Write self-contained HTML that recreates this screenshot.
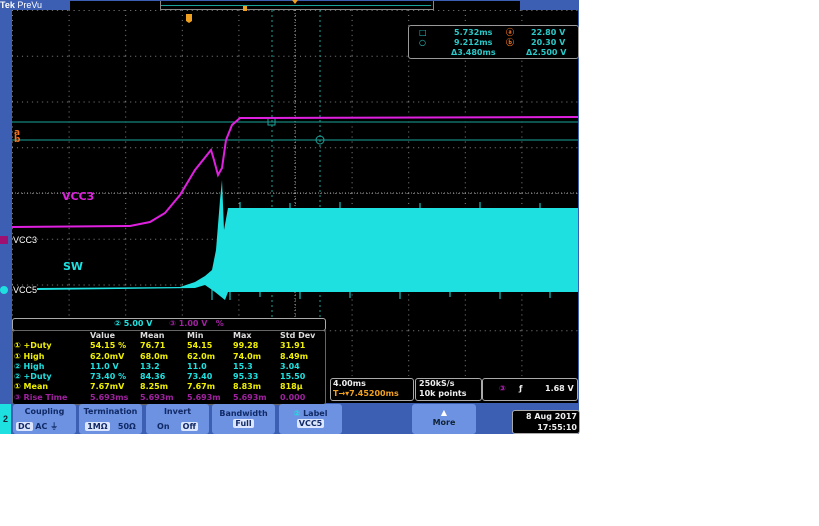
<!DOCTYPE html>
<html><head><meta charset="utf-8"><style>
body{margin:0;width:819px;height:526px;background:#fff;position:relative;overflow:hidden;font-family:"Liberation Sans",sans-serif;}
.a{position:absolute;}
.m{font-family:"DejaVu Sans","Liberation Sans",sans-serif;font-weight:bold;font-size:8px;line-height:10.3px;white-space:nowrap;}
.m span{display:inline-block}
.c0{width:76px}.c1{width:50px}.c2{width:47px}.c3{width:46px}.c4{width:47px}
.btn{position:absolute;top:404px;height:30px;background:#6d92e2;border-radius:3px;color:#112a66;font-size:8px;line-height:10px;font-weight:bold;text-align:center;font-family:"DejaVu Sans",sans-serif;white-space:nowrap;box-sizing:border-box;padding-top:3px}
.sel{background:#dde6ff;padding:0 2px;border-radius:2px}
.box{position:absolute;border:1px solid #aaa;border-radius:3px;background:#000;color:#eee;font-family:"DejaVu Sans",sans-serif;font-size:8px;font-weight:bold;line-height:10px;white-space:nowrap;}
</style></head><body>
<div class="a" style="left:0;top:0;width:579px;height:434px;background:#3c5fb4"></div>
<div class="a" style="left:12px;top:10px;width:566px;height:393px;background:#000"></div>
<div class="a" style="left:0;top:0;width:70px;height:10px;color:#fff;font-size:9px;line-height:10px;font-weight:bold">Tek <span style="font-weight:normal">PreVu</span></div>
<div class="a" style="left:70px;top:1px;width:450px;height:9px;background:#000"></div>
<div class="a" style="left:160px;top:1px;width:272px;height:8px;border:1px solid #888;border-top:none"></div>
<div class="a" style="left:161px;top:5px;width:270px;height:1px;background:#1aa39a"></div>
<svg class="a" style="left:0;top:0" width="579" height="434">
<defs><pattern id="g" x="12" y="10" width="56.6" height="45.75" patternUnits="userSpaceOnUse">
<path d="M0 0.5H56.6M0.5 0V45.75" stroke="#888" stroke-width="1" stroke-dasharray="1 4" fill="none"/></pattern></defs>
<rect x="12" y="10" width="566" height="366" fill="url(#g)"/>
<line x1="12" y1="193" x2="578" y2="193" stroke="#999" stroke-dasharray="1 2"/>
<line x1="295" y1="10" x2="295" y2="376" stroke="#999" stroke-dasharray="1 2"/>
<line x1="12" y1="122" x2="578" y2="122" stroke="#1aa39a"/>
<line x1="12" y1="140" x2="578" y2="140" stroke="#1aa39a"/>
<line x1="272" y1="10" x2="272" y2="376" stroke="#1aa39a" stroke-dasharray="2 3"/>
<line x1="320" y1="10" x2="320" y2="376" stroke="#1aa39a" stroke-dasharray="2 3"/>
<rect x="268" y="118" width="7" height="7" fill="none" stroke="#1aa39a"/>
<circle cx="320" cy="140" r="4" fill="none" stroke="#1aa39a"/>
<path d="M12 227 L130 226 L150 222 L165 213 L180 195 L195 170 L211 150 L214 160 L218 175 L222 168 L226 140 L232 125 L240 118 L578 117" stroke="#e020e0" stroke-width="2" fill="none"/>
<path d="M37 288 L180 287 L195 282 L205 276 L212 270 L216 250 L220 200 L222 180 L224 230 L228 208 L578 208 L578 292 L228 292 L225 300 L215 292 L205 285 L195 288 L37 290Z" fill="#1ee0e0"/>
<path d="M212 282V300M230 292v8M260 292v5M300 292v7M350 292v6M400 292v7M450 292v5M500 292v7M550 292v6M240 208v-6M290 208v-5M340 208v-6M420 208v-5M480 208v-6M540 208v-5" stroke="#1ee0e0"/>
<path d="M186 14h6v7l-3 2-3-2z" fill="#f0a020"/><path d="M292 0h6l-3 4z" fill="#f0a020"/><path d="M243 6h4v5h-4z" fill="#f0a020"/>
<text x="14" y="135" fill="#f07020" font-size="9" font-weight="bold" font-family="DejaVu Sans">a</text>
<text x="14" y="142" fill="#f07020" font-size="9" font-weight="bold" font-family="DejaVu Sans">b</text>
<text x="62" y="200" fill="#e020e0" font-size="11" font-weight="bold" font-family="DejaVu Sans">VCC3</text>
<text x="63" y="270" fill="#1ee0e0" font-size="11" font-weight="bold" font-family="DejaVu Sans">SW</text>
<rect x="0" y="236" width="8" height="8" fill="#a01070"/>
<text x="13" y="243" fill="#fff" font-size="9" font-family="Liberation Sans">VCC3</text>
<circle cx="4" cy="290" r="4" fill="#1ee0e0"/>
<text x="13" y="293" fill="#fff" font-size="9" font-family="Liberation Sans">VCC5</text>
</svg>
<div class="box" style="left:408px;top:25px;width:169px;height:32px;color:#2ac8c8;border-color:#999">
<div class="a" style="left:10px;top:2px">□</div><div class="a" style="left:45px;top:2px">5.732ms</div><div class="a" style="left:97px;top:2px;color:#f07020">ⓐ</div><div class="a" style="left:122px;top:2px">22.80 V</div>
<div class="a" style="left:10px;top:12px">○</div><div class="a" style="left:45px;top:12px">9.212ms</div><div class="a" style="left:97px;top:12px;color:#f07020">ⓑ</div><div class="a" style="left:122px;top:12px">20.30 V</div>
<div class="a" style="left:42px;top:22px">Δ3.480ms</div><div class="a" style="left:117px;top:22px">Δ2.500 V</div></div>
<div class="box" style="left:12px;top:318px;width:312px;height:11px;text-align:center"><span style="color:#1ee0e0">② 5.00 V</span> &nbsp;&nbsp;&nbsp;&nbsp; <span style="color:#a020a0">③ 1.00 V &nbsp; %</span></div>
<div class="box" style="left:12px;top:330px;width:312px;height:73px;border-color:#666"></div>
<div class="a m" style="left:14px;top:331px">
<div style="color:#ddd"><span class="c0"></span><span class="c1">Value</span><span class="c2">Mean</span><span class="c3">Min</span><span class="c4">Max</span>Std Dev</div>
<div style="color:#f0f000"><span class="c0">① +Duty</span><span class="c1">54.15 %</span><span class="c2">76.71</span><span class="c3">54.15</span><span class="c4">99.28</span>31.91</div>
<div style="color:#f0f000"><span class="c0">① High</span><span class="c1">62.0mV</span><span class="c2">68.0m</span><span class="c3">62.0m</span><span class="c4">74.0m</span>8.49m</div>
<div style="color:#1ee0e0"><span class="c0">② High</span><span class="c1">11.0 V</span><span class="c2">13.2</span><span class="c3">11.0</span><span class="c4">15.3</span>3.04</div>
<div style="color:#1ee0e0"><span class="c0">② +Duty</span><span class="c1">73.40 %</span><span class="c2">84.36</span><span class="c3">73.40</span><span class="c4">95.33</span>15.50</div>
<div style="color:#f0f000"><span class="c0">① Mean</span><span class="c1">7.67mV</span><span class="c2">8.25m</span><span class="c3">7.67m</span><span class="c4">8.83m</span>818µ</div>
<div style="color:#a020a0"><span class="c0">③ Rise Time</span><span class="c1">5.693ms</span><span class="c2">5.693m</span><span class="c3">5.693m</span><span class="c4">5.693m</span>0.000</div>
</div>
<div class="box" style="left:330px;top:378px;width:80px;height:21px;padding-left:2px">4.00ms<br><span style="color:#f0a020">T→▾7.45200ms</span></div>
<div class="box" style="left:415px;top:378px;width:62px;height:21px;padding-left:3px">250kS/s<br>10k points</div>
<div class="box" style="left:482px;top:378px;width:94px;height:21px"><span class="a" style="left:16px;top:5px;color:#c020c0">③</span><span class="a" style="left:36px;top:5px">ƒ</span><span class="a" style="left:62px;top:5px">1.68 V</span></div>
<div class="a" style="left:0;top:404px;width:11px;height:30px;background:#1ee0e0;color:#123;font-size:9px;font-weight:bold;text-align:center;line-height:30px">2</div>
<div class="btn" style="left:13px;width:63px">Coupling<div style="margin-top:5px;text-align:left;padding-left:3px"><span class="sel">DC</span> AC ⏚</div></div>
<div class="btn" style="left:79px;width:63px">Termination<div style="margin-top:5px"><span class="sel">1MΩ</span> &nbsp; 50Ω</div></div>
<div class="btn" style="left:146px;width:63px">Invert<div style="margin-top:5px">On &nbsp;&nbsp; <span class="sel">Off</span></div></div>
<div class="btn" style="left:212px;width:63px;padding-top:5px">Bandwidth<br><span class="sel">Full</span></div>
<div class="btn" style="left:279px;width:63px;padding-top:5px"><span style="color:#1ee0e0">②</span> Label<br><span class="sel">VCC5</span></div>
<div class="btn" style="left:412px;width:64px;padding-top:4px;color:#fff">▲<br><span style="color:#123">More</span></div>
<div class="box" style="left:512px;top:410px;width:64px;height:22px;text-align:right;padding-right:2px;line-height:11px">8 Aug 2017<br>17:55:10</div>
</body></html>
